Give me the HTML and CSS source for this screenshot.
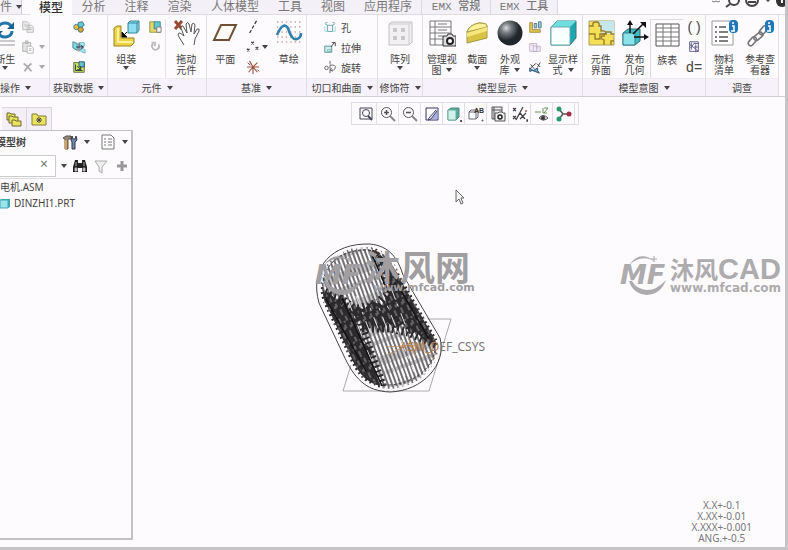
FILE: index.html
```html
<!DOCTYPE html>
<html lang="zh-CN">
<head>
<meta charset="utf-8">
<title>模型</title>
<link rel="stylesheet" href="styles.css">
</head>
<body>
<div class="app">
  <header class="ribbon">
    <nav class="tabs">
      <button class="tab tab-file">件<i class="caret"></i></button>
      <span></span>
      <button class="tab tab-active">模型</button>
      <button class="tab">分析</button>
      <button class="tab">注释</button>
      <button class="tab">渲染</button>
      <button class="tab">人体模型</button>
      <button class="tab">工具</button>
      <button class="tab">视图</button>
      <button class="tab">应用程序</button>
      <button class="tab tab-mono">EMX 常规</button>
      <button class="tab tab-mono">EMX 工具</button>
      <div class="quick">
        <svg width="76" height="10" viewBox="0 0 76 10" fill="none" stroke="#444"><path d="M3 1q2 2 4 0q2 2 4 0" stroke="#777"/><circle cx="25" cy="0" r="5" stroke-width="2"/><path d="M21 4l-4 3" stroke-width="2"/><circle cx="43" cy="0" r="6" stroke-width="2"/><path d="M39 2h8" stroke-width="2"/><path d="M57 0h4l-2 2z" fill="#444" stroke="none"/><circle cx="73" cy="1" r="6" fill="#333" stroke="none"/><path d="M73 0v3" stroke="#fff" stroke-width="2"/></svg>
      </div>
    </nav>

    <div class="groups">
      <section class="group">
        <div class="body cols-ops">
          <button class="tool">
            <svg class="ico" viewBox="0 0 28 28" fill="none"><path d="M7 10a7 6 0 0 1 13-3M21 12a7 6 0 0 1-13 3" stroke="#2276aa" stroke-width="3"/><path d="M23 3v7h-7zM5 19v-7h7z" fill="#17608f"/><path d="M4 22h20M4 26h20" stroke="#999"/></svg>
            <span>新生</span><i class="caret"></i>
          </button>
          <div class="stack stack-left">
            <button class="mini" aria-label="复制"><svg viewBox="0 0 16 16" fill="#eee" stroke="#b5b5b5"><path d="M2 2h5l2 2v7H2zM7 6h5l2 2v6H7z"/><path d="M4 5h2M4 7h2M9 9h3M9 11h3"/></svg></button>
            <button class="mini" aria-label="粘贴"><svg viewBox="0 0 16 16" fill="#e4e4e4" stroke="#b0b0b0"><path d="M2 3h9v10H2zM5 1h3v3H5z"/><path d="M7 7h5l2 2v6H7z" fill="#fff"/><path d="M9 10h3M9 12h3"/></svg><i class="caret pale"></i></button>
            <button class="mini" aria-label="删除"><svg viewBox="0 0 16 16" fill="none" stroke="#aaa" stroke-width="2"><path d="M3 4q5 3 9 9M12 4q-5 3-8 9"/></svg><i class="caret pale"></i></button>
          </div>
        </div>
        <button class="caption caption-start">操作<i class="caret"></i></button>
      </section>

      <section class="group">
        <div class="body">
          <div class="stack">
            <button class="mini" aria-label="用户定义特征"><svg viewBox="0 0 16 16" stroke="#36717c"><circle cx="5" cy="8" r="3" fill="#edbd42"/><path d="M7 3l5-1 2 4-4 3-3-2z" fill="#62c9da"/><circle cx="10" cy="11" r="3" fill="#dda531"/></svg></button>
            <button class="mini" aria-label="复制几何"><svg viewBox="0 0 16 16"><path d="M1 2l5 2v8l-5-3z" fill="#73dce5" stroke="#47818c"/><path d="M9 3h5v4H9zM10 9l5 2v4l-5-2z" fill="#a5ecf2" stroke="#6fb4bd"/><path d="M5 8h8M8 3v10M10 6l3 2-3 3" stroke="#123" fill="none"/></svg></button>
            <button class="mini" aria-label="收缩包络"><svg viewBox="0 0 16 16"><path d="M2 3h12v11H2z" fill="#d7df62" stroke="#51663f"/><path d="M8 2h6v6H8z" fill="#5bc4d0" stroke="#31505a"/><path d="M4 5v7h8M6 7l4 4M10 7v4H6" stroke="#15333b" fill="none"/></svg></button>
          </div>
        </div>
        <button class="caption">获取数据<i class="caret"></i></button>
      </section>

      <section class="group">
        <div class="body cols-component">
          <button class="tool">
            <svg class="ico" viewBox="0 0 28 28"><path d="M2 9l3-2h4v12h13v5l-3 3H2z" fill="#edd34b" stroke="#9a8521"/><path d="M6 9v14h15" stroke="#fff29a" fill="none" stroke-width="2"/><path d="M16 4l2-2h9v9l-2 3h-9z" fill="#8eddf0" stroke="#368499"/><path d="M16 4h9v9M25 4l2-2" stroke="#368499" fill="none"/><path d="M15 13l-4 4M10 13v5h5z" stroke="#111"/></svg>
            <span>组装</span><i class="caret"></i>
          </button>
          <div class="stack">
            <button class="mini" aria-label="创建"><svg viewBox="0 0 16 16"><path d="M2 2h6v8h6v4H2z" fill="#e4d667" stroke="#8e9441"/><path d="M7 2h7v8H7z" fill="#65c6ce" stroke="#34858e"/><path d="M10 8h5v6h-5z" fill="#f3f0ee" stroke="#777"/></svg></button>
            <button class="mini" aria-label="重复"><svg viewBox="0 0 16 16" fill="none" stroke="#bbb" stroke-width="2"><path d="M12 5a4 4 0 1 1-6-1"/><path d="M4 3h4v4"/></svg></button>
          </div>
          <button class="tool ruled">
            <svg class="ico" viewBox="0 0 28 28" fill="none"><path d="M3 2l7 8M10 2l-7 8" stroke="#984a32" stroke-width="3"/><path d="M12 26l-5-8q-2-4 1-4l4 3-3-8q0-3 2-2l4 7-1-9q2-3 3 0l2 8 1-8q2-2 3 1l-1 9 3-5q3-1 2 2l-4 8-1 6" fill="#fff" stroke="#555"/></svg>
            <span>拖动<br>元件</span>
          </button>
        </div>
        <button class="caption">元件<i class="caret"></i></button>
      </section>

      <section class="group">
        <div class="body cols-datum">
          <button class="tool">
            <svg class="ico" viewBox="0 0 28 28"><path d="M10 6h15l-7 15H3z" fill="#fdfaf5" stroke="#705035" stroke-width="2"/></svg>
            <span>平面</span>
          </button>
          <div class="stack">
            <button class="mini" aria-label="轴"><svg viewBox="0 0 16 16"><path d="M12 1L4 15" stroke="#333" stroke-dasharray="4 2" stroke-width="1.4"/></svg></button>
            <button class="mini" aria-label="点"><svg viewBox="0 0 16 16" fill="none" stroke="#444"><path d="M6 2l3 3m0-3L6 5M1 10l3 3m0-3l-3 3M11 8l3 3m0-3l-3 3" stroke-width="1.4"/></svg></button>
            <button class="mini" aria-label="坐标系"><svg viewBox="0 0 16 16" fill="none"><path d="M1 8h14M8 8L4 1M8 8l5-5M8 8l-5 6M8 8l5 6M8 8v8" stroke="#9b563c" stroke-width="1.3"/><path d="M2 3l3 3M13 11l2 2" stroke="#333"/></svg></button>
          </div>
          <i class="caret lone"></i>
          <button class="tool">
            <svg class="ico" viewBox="0 0 28 28" fill="none"><g stroke="#c9a797" stroke-width="1.4" stroke-dasharray="1.4 3"><path d="M2 3h25M2 8h25M2 13h25M2 18h25M2 23h25"/></g><path d="M2 16Q8 2 13 9Q17 22 22 20Q26 19 26 14" stroke="#2f80ab" stroke-width="2.6"/></svg>
            <span>草绘</span>
          </button>
        </div>
        <button class="caption">基准<i class="caret"></i></button>
      </section>

      <section class="group">
        <div class="body">
          <div class="stack rows">
            <button class="row"><svg viewBox="0 0 16 16" fill="none" stroke="#54999d"><path d="M2 4l3 2v7h6V6l3-2M5 6h6M3 3h2M11 3h2" /><path d="M2 7v6h3M14 7v6h-3" stroke="#9adadd"/></svg>孔</button>
            <button class="row"><svg viewBox="0 0 16 16" fill="none"><path d="M2 7h8v7H2z" fill="#d6efec" stroke="#498b88"/><path d="M9 8l4-5M10 3h4v4" stroke="#333"/><path d="M5 11h4v2H5z" stroke="#7bb"/></svg>拉伸</button>
            <button class="row"><svg viewBox="0 0 16 16" fill="none" stroke="#555"><path d="M8 1v14" stroke-dasharray="4 1"/><circle cx="4" cy="9" r="2"/><path d="M8 6q7-1 6 3t-6 2M10 9l-2 2 3 2"/></svg>旋转</button>
          </div>
        </div>
        <button class="caption">切口和曲面<i class="caret"></i></button>
      </section>

      <section class="group">
        <div class="body">
          <button class="tool">
            <svg class="ico" viewBox="0 0 28 28"><path d="M3 5l3-2h20v20l-3 3H3z" fill="#f2f0f3" stroke="#c2c0c4"/><path d="M3 5h20v21M23 5l3-2" fill="none" stroke="#ccc"/><g fill="#c9c7cb"><path d="M7 9h4v4H7zM15 9h4v4h-4zM7 17h4v4H7zM15 17h4v4h-4z"/></g></svg>
            <span>阵列</span><i class="caret"></i>
          </button>
        </div>
        <button class="caption">修饰符<i class="caret"></i></button>
      </section>

      <section class="group">
        <div class="body cols-display">
          <button class="tool">
            <svg class="ico" viewBox="0 0 28 28" fill="none"><path d="M2 2h21v24H2zM7 2v24M2 8h21M2 14h21M2 20h21M10 5h9M10 11h9M10 17h5" stroke="#777"/><path d="M15 17h4l1-2h4l1 2h3v10H15z" fill="#ddd" stroke="#333"/><circle cx="22" cy="22" r="3" stroke="#222" stroke-width="2" fill="#fff"/></svg>
            <span>管理视<br>图<i class="caret"></i></span>
          </button>
          <button class="tool">
            <svg class="ico" viewBox="0 0 28 28"><path d="M4 13Q6 6 16 4q9 0 8 4v11L4 24z" fill="#d9c346" stroke="#a5983e"/><path d="M4 13Q6 6 16 4q9 0 8 4L4 13z" fill="#fff19b" stroke="#a89b46"/><path d="M4 14l20-6v4L4 18z" fill="#f5e77c"/></svg>
            <span>截面</span><i class="caret"></i>
          </button>
          <button class="tool">
            <svg class="ico" viewBox="0 0 28 28"><defs><radialGradient id="ball" cx=".35" cy=".3"><stop offset="0" stop-color="#ddd"/><stop offset=".4" stop-color="#777d83"/><stop offset="1" stop-color="#20262c"/></radialGradient></defs><circle cx="14" cy="14" r="12.500" fill="url(#ball)"/></svg>
            <span>外观<br>库<i class="caret"></i></span>
          </button>
          <div class="stack">
            <button class="mini" aria-label="编辑位置"><svg viewBox="0 0 16 16"><path d="M2 3h3v8h9v3H2z" fill="#e5c94c" stroke="#9b803a"/><path d="M7 4h3v5H7zM12 2h3v7h-3z" fill="#99c7da" stroke="#55798b"/></svg></button>
            <button class="mini" aria-label="切换状态"><svg viewBox="0 0 16 16" fill="#f5edf8" stroke="#c0adc7"><path d="M2 4h8v9H2zM6 7h8v6H6zM4 6h3M9 9h3"/></svg></button>
            <button class="mini" aria-label="显示组合"><svg viewBox="0 0 16 16" fill="none"><path d="M3 9l6-5M3 5l4 5M10 4l4 4M14 3l-3 5" stroke="#333"/><path d="M2 9l4 3 5-3v3l2 3-8-3-3 1z" fill="#69a8c8" stroke="#244965"/></svg></button>
          </div>
          <button class="tool">
            <svg class="ico" viewBox="0 0 28 28"><path d="M2 8l6-6h19v17l-6 7H2z" fill="#1ba7ad" stroke="#47777c"/><path d="M2 8l6-6h19l-6 6z" fill="#6fdede"/><path d="M2 8h19v18H2z" fill="#f8ffff" stroke="#6baab0"/></svg>
            <span>显示样<br>式<i class="caret"></i></span>
          </button>
        </div>
        <button class="caption">模型显示<i class="caret"></i></button>
      </section>

      <section class="group">
        <div class="body cols-intent">
          <button class="tool">
            <svg class="ico" viewBox="0 0 28 28"><path d="M2 2h25v24H2z" fill="#f4df57" stroke="#aaa065"/><path d="M12 2h15v13H15l-1-5h-2z" fill="#c5e8ed"/><path d="M2 7h4q-1-4 3-4t3 4h2v5q5-1 5 3h-6v5H8v-5H2" fill="none" stroke="#987f2d" stroke-width="1.4"/><path d="M15 15h4v-2h5v2h3M17 26v-5q-4-1-2-4h3M24 26v-4h3" fill="none" stroke="#987f2d" stroke-width="1.4"/></svg>
            <span>元件<br>界面</span>
          </button>
          <button class="tool">
            <svg class="ico" viewBox="0 0 28 28"><path d="M2 14l5-4h12v12l-5 4H2z" fill="#3cbbc5" stroke="#306f77"/><path d="M2 14h12v12H2z" fill="#8be2ea" stroke="#34808a"/><path d="M9 14V3M12 15L23 4M13 18h13" stroke="#111" stroke-width="1.5"/><path d="M6 6l3-5 3 5zM19 3h6v6zM23 15l5 3-5 3z" fill="#111"/></svg>
            <span>发布<br>几何</span>
          </button>
          <button class="tool boxed">
            <svg class="ico" viewBox="0 0 28 28"><path d="M3 4h23v22H3z" fill="#fff" stroke="#555"/><path d="M3 8h23M3 12h23M3 17h23M3 21h23M10 4v22M18 4v22" stroke="#777"/></svg>
            <span>族表</span>
          </button>
          <div class="stack">
            <button class="mini sign">( )</button>
            <button class="mini" aria-label="切换符号"><svg viewBox="0 0 16 16" fill="none" stroke="#555588"><path d="M3 2h10v11H3zM3 5l10 8M5 3v8M8 4h5M8 8h5M4 9l5-6M10 5v9"/></svg></button>
            <button class="mini sign">d=</button>
          </div>
        </div>
        <button class="caption">模型意图<i class="caret"></i></button>
      </section>

      <section class="group">
        <div class="body cols-two">
          <button class="tool">
            <svg class="ico" viewBox="0 0 28 28"><path d="M2 2h21v24H2z" fill="#fff" stroke="#999"/><path d="M5 8h2M9 8h7M5 13h2M9 13h9M5 18h2M9 18h9M5 22h2M9 22h9" stroke="#555" stroke-width="1.4"/><rect x="19" y="1" width="9" height="13" rx="4" fill="#1d79bb"/><path d="M23 3v2M22 7h2v5M21 12h4" stroke="#fff" stroke-width="1.5" fill="none"/></svg>
            <span>物料<br>清单</span>
          </button>
          <button class="tool">
            <svg class="ico" viewBox="0 0 28 28" fill="none"><g stroke="#777" stroke-width="1.6"><rect x="1" y="20" width="10" height="5" rx="2.500" transform="rotate(-50 6 22)"/><rect x="7" y="15" width="10" height="5" rx="2.500" transform="rotate(-40 12 17)"/><rect x="12" y="9" width="10" height="5" rx="2.500" transform="rotate(-50 17 11)"/></g><rect x="19" y="1" width="9" height="13" rx="4" fill="#1d79bb"/><path d="M23 3v2M22 7h2v5M21 12h4" stroke="#fff" stroke-width="1.5"/></svg>
            <span>参考查<br>看器</span>
          </button>
        </div>
        <button class="caption">调查</button>
      </section>
    </div>
  </header>

  <main class="work">
    <aside class="side">
      <div class="side-tabs">
        <button aria-label="模型树"><svg viewBox="0 0 16 16" fill="#ebe35e" stroke="#6d6930"><path d="M1 2h3l1 1h4v6H1z"/><path d="M3 5h3l1 1h5v6H3z"/><path d="M6 9h3l1 1h5v5H6z"/></svg></button>
        <button aria-label="文件夹浏览器"><svg viewBox="0 0 16 16" fill="#ebe35e" stroke="#827d38"><path d="M1 3h5l1 2h8v9H1z"/><path d="M8 6v6M5 9h6M6 7l4 4M10 7l-4 4" stroke="#444"/></svg></button>
      </div>
      <div class="panel">
        <div class="panel-head">
          <h2>模型树</h2>
          <button class="pick" aria-label="设置"><svg viewBox="0 0 16 16"><path d="M1 4l3-2h5v3H6v10H3V5z" fill="#958875" stroke="#555"/><path d="M10 2l1 3h2l1-3 1 4-2 2v7h-3V8L9 6z" fill="#6f8eae" stroke="#334"/><path d="M4 6v9" stroke="#e0a34d" stroke-width="2"/></svg><i class="caret"></i></button>
          <button class="pick" aria-label="显示"><svg viewBox="0 0 16 16" fill="#fff" stroke="#777"><path d="M2 1h9l3 3v11H2z"/><path d="M4 5h2M8 5h4M4 8h2M8 8h4M4 11h2M8 11h4"/></svg><i class="caret"></i></button>
        </div>
        <div class="search">
          <input type="text" aria-label="搜索"><button class="clear" aria-label="清除">×</button>
          <i class="caret"></i>
          <button aria-label="查找"><svg viewBox="0 0 16 16" fill="#222"><path d="M3 2h3v3h4V2h3l2 7v5h-5v-4H6v4H1V9z"/><path d="M3 10h2v3H3zM11 10h2v3h-2zM4 4v4M12 4v4" fill="#ddd" stroke="#aaa"/></svg></button>
          <button aria-label="过滤"><svg viewBox="0 0 16 16" fill="#eee" stroke="#aaa"><path d="M2 3h12L9 9v6l-3-2V9z"/></svg></button>
          <button aria-label="添加"><svg viewBox="0 0 16 16"><path d="M8 3v10M3 8h10" stroke="#999" stroke-width="3"/></svg></button>
        </div>
        <ul class="tree">
          <li>电机.ASM</li>
          <li><svg viewBox="0 0 12 12"><path d="M0 3l2-1h8v8l-2 1H0z" fill="#35a9b3"/><path d="M0 3h8v8H0z" fill="#98e5ec" stroke="#4ba4ad"/></svg>DINZHI1.PRT</li>
        </ul>
      </div>
    </aside>

    <div class="view">
      <div class="bar">
        <button aria-label="重新调整"><svg viewBox="0 0 16 16" fill="none" stroke="#445"><path d="M2 2h12v11H2z"/><circle cx="8" cy="7" r="3.500"/><path d="M10 10l4 4" stroke-width="2"/></svg></button>
        <button aria-label="放大"><svg viewBox="0 0 16 16" fill="none" stroke="#555"><circle cx="6.500" cy="6.500" r="5"/><path d="M4 6.500h5M6.500 4v5" stroke-width="1.6"/><path d="M10 10l5 5" stroke-width="2" stroke="#888"/></svg></button>
        <button aria-label="缩小"><svg viewBox="0 0 16 16" fill="none" stroke="#555"><circle cx="6.500" cy="6.500" r="5"/><path d="M4 6.500h5" stroke-width="1.6"/><path d="M10 10l5 5" stroke-width="2" stroke="#888"/></svg></button>
        <button aria-label="重画"><svg viewBox="0 0 16 16"><path d="M2 2h12v12H2z" fill="#fff" stroke="#336"/><path d="M13 3v10H5z" fill="#a9b1dc"/><path d="M12 4l-7 8-1 2 3-1 6-8" fill="#dfe3f5" stroke="#446"/></svg></button>
        <button aria-label="显示样式"><svg viewBox="0 0 16 16"><path d="M2 4l3-2h8v9l-3 3H2z" fill="#4fa89a" stroke="#568c83"/><path d="M2 4h8v10H2z" fill="#d2f1e8" stroke="#6daea1"/><path d="M14 14h2v2h-2z" fill="#555"/></svg></button>
        <button aria-label="已命名视图"><svg viewBox="0 0 16 16" fill="#fff" stroke="#667"><path d="M1 6l2-2h7v7l-2 2H1zM1 6h7v7"/><text x="6" y="7" class="ab">AB</text><path d="M14 14h1v1h-1z" fill="#555"/></svg></button>
        <button aria-label="视图管理器"><svg viewBox="0 0 16 16" fill="#eee" stroke="#555"><path d="M2 1h10v12H2zM4 1v12M2 4h10"/><path d="M5 7h3l1-1h3l1 1h2v8H5z"/><circle cx="10" cy="11" r="2" stroke="#222" stroke-width="1.500"/></svg></button>
        <button aria-label="基准显示"><svg viewBox="0 0 16 16" fill="none" stroke="#444" stroke-width="1.300"><path d="M1 2l3 3m0-3L1 5M11 1L4 14M1 10l3 3m0-3l-3 3M8 7l5 6m1-6l-6 6"/><path d="M13 5h2" stroke="#a55"/><path d="M15 14h1v1h-1z"/></svg></button>
        <button aria-label="注释显示"><svg viewBox="0 0 16 16" fill="none" stroke="#555"><path d="M1 6h6M9 2v5h4M10 2h4l-4 5" stroke="#695"/><path d="M5 12q4-5 9 0q-4 4-9 0"/><circle cx="9" cy="12" r="2" fill="#333"/></svg></button>
        <button aria-label="旋转中心"><svg viewBox="0 0 16 16"><path d="M3 3l4 5h7M7 8l-4 5" stroke="#555" stroke-width="1.500" fill="none"/><circle cx="3" cy="3" r="2.500" fill="#2b986b"/><circle cx="3" cy="13" r="2.500" fill="#2b986b"/><circle cx="13" cy="8" r="2.500" fill="#a32c3f"/></svg></button>
      </div>

      <svg class="model" width="180" height="160" viewBox="310 238 180 160" fill="none">
        <defs>
          <pattern id="wire" width="4" height="31" patternUnits="userSpaceOnUse" patternTransform="rotate(-20)"><path d="M1 0v31" stroke="#222" stroke-width="1.300"/><path d="M3 0v9M3 15v4" stroke="#777" stroke-width=".8"/></pattern>
          <pattern id="mesh" width="7" height="23" patternUnits="userSpaceOnUse" patternTransform="rotate(-24)"><path d="M0 0h7v23H0z" fill="#2c2a2d"/><path d="M1 0v4M3 7v6M5 15v5M6 2v3M2 19v2" stroke="#bbb" stroke-width=".8"/></pattern>
          <clipPath id="hull"><path d="M323 302C313 270 334 246 368 247C386 249 394 260 400 275L437 339C444 362 422 387 390 389C367 388 357 377 347 353Z"/></clipPath>
        </defs>
        <path d="M365 319h86l-22 72h-86z" stroke="#aaa"/>
        <g clip-path="url(#hull)">
          <path d="M310 238h140v160H310z" fill="url(#wire)"/>
          <path d="M318 289L330 293L336 300L342 295L349 309L354 303L360 318L357 326L366 343L372 352L371 362L384 389L350 374Z" fill="url(#mesh)"/>
          <path d="M369 244L388 262L402 278L440 345L426 342L416 332L409 334L403 324L395 328L388 323L381 332L374 325L366 331L358 315L352 312L350 306L364 309L372 301L382 305L386 297L392 291L386 281L384 271Z" fill="url(#mesh)"/>
          <g stroke="#2c2a2d" stroke-dasharray="2 3" stroke-width="9"><path d="M320 291L340 298L356 311L370 352L383 388"/><path d="M358 309L378 303L389 292L384 268L371 248M362 328L390 328L408 332L436 344"/></g>
          <g stroke="#f5f3f6" stroke-width=".9" stroke-dasharray="12 5 3 7"><path d="M348 300l33 86M356 296l34 88M364 292l34 88M373 292l32 84M381 290l33 82M391 288l28 72"/></g>
          <path d="M370 250l18 42M399 287l30 52M342 298l40 88M326 299l40 72" stroke="#111" stroke-width="1.500"/>
        </g>
        <g stroke="#444"><path d="M319 303C309 267 332 243 370 244C390 246 398 259 403 275L440 338C447 364 423 391 390 392C365 391 354 378 343 354Z"/><path d="M323 302C313 270 334 246 368 247C386 249 394 260 400 275L437 339C444 362 422 387 390 389C367 388 357 377 347 353Z" stroke="#fefbff" stroke-width="4" stroke-dasharray="3 2"/><path d="M325 301C316 272 335 249 368 250C384 252 392 262 397 276L434 340C440 360 420 383 390 385C370 384 361 374 351 353Z" stroke-dasharray="3 2"/></g>
        <path d="M388 355l24-13 22 16M408 338l8 18M386 347l34-2" stroke="#bd8b5c" opacity=".8"/>
      </svg>
      <p class="csys"><span>ASM_D</span>EF_CSYS</p>

      <div class="mark mark-center">
        <svg width="50" height="44" viewBox="0 0 50 44"><path d="M9 12Q20-4 36 9Q22 0 9 12zM9 28Q13 41 27 42Q41 41 46 27Q37 37 27 37Q16 36 12 28z" fill="currentColor"/><path d="M34 3v6M31 6h6" stroke="currentColor"/><text x="0" y="31" class="mf">MF</text></svg>
        <div><strong class="wide">沐风网</strong><small>www.mfcad.com</small></div>
      </div>
      <div class="mark mark-right">
        <svg width="50" height="44" viewBox="0 0 50 44"><path d="M9 12Q20-4 36 9Q22 0 9 12zM9 28Q13 41 27 42Q41 41 46 27Q37 37 27 37Q16 36 12 28z" fill="currentColor"/><path d="M34 3v6M31 6h6" stroke="currentColor"/><text x="0" y="31" class="mf">MF</text></svg>
        <div><strong>沐风<b>CAD</b></strong><small>www.mfcad.com</small></div>
      </div>

      <svg class="pointer" width="10" height="17" viewBox="0 0 10 17"><path d="M1 1v12l3-3 2 5 2-1-2-5h3z" fill="#f4f4f4" stroke="#666"/></svg>

      <div class="tolerance"><span>X.X+-0.1</span><span>X.XX+-0.01</span><span>X.XXX+-0.001</span><span>ANG.+-0.5</span></div>
    </div>
  </main>
</div>
</body>
</html>
```

FILE: styles.css
```css
* { box-sizing: border-box; }

body {
  margin: 0;
  background: #fefbff;
  color: #444;
  font: 10px/11px "Noto Sans", "Noto Sans CJK SC", sans-serif;
}

button {
  margin: 0;
  padding: 0;
  border: 0;
  background: none;
  color: inherit;
  font: inherit;
  white-space: nowrap;
}

svg { display: block; flex: none; }

.app {
  display: flex;
  flex-direction: column;
  min-height: 100vh;
  overflow: hidden;
  border: solid #c6c4c7;
  border-width: 0 3px 3px 0;
}

.caret {
  display: inline-block;
  flex: none;
  border: 3px solid transparent;
  border-top: 4px solid #444;
  border-bottom: 0;
}

.pale { border-top-color: #aaa; }

/* Ribbon tabs */
.tabs {
  display: grid;
  grid-template-columns: 22fr 8fr 42fr 43fr 43fr 43fr 68fr 42fr 44fr 66fr 69fr 67fr 228fr;
  height: 15px;
  border-bottom: 1px solid #dfdbe2;
}

.tab {
  display: flex;
  align-items: center;
  justify-content: center;
  min-width: 0;
  height: 14px;
  background: #f4f0f7;
  color: #777;
  font-size: 12px;
  line-height: 14px;
}

.tab-file {
  gap: 4px;
  justify-content: flex-start;
  border-right: 1px solid #ccc;
}

.tab-active {
  height: 15px;
  background: #fefbff;
  color: #333;
  font-weight: 500;
}

.tab-mono {
  border-left: 1px solid #ddd8e0;
  font-family: "Liberation Mono", "Noto Sans CJK SC", monospace;
  font-size: 11px;
  font-weight: 500;
}

.quick {
  display: flex;
  justify-content: flex-end;
  overflow: hidden;
  border-left: 1px solid #ddd8e0;
}

/* Ribbon groups */
.groups {
  display: grid;
  grid-template-columns: 50fr 58fr 99fr 100fr 71fr 45fr 160fr 123fr 73fr 6fr;
  height: 82px;
  border-bottom: 1px solid #d2ced5;
  font-family: "Noto Sans CJK SC", sans-serif;
}

.group {
  display: flex;
  flex-direction: column;
  min-width: 0;
  border-right: 1px solid #e2dee5;
}

.body {
  display: grid;
  flex: 1;
  padding-top: 4px;
}

.cols-ops { grid-template-columns: minmax(0, 9fr) minmax(0, 32fr); }
.cols-component { grid-template-columns: 37fr 21fr 41fr; }
.cols-datum { grid-template-columns: 37fr 19fr 9fr 35fr; }
.cols-display { grid-template-columns: 38fr 33fr 33fr 18fr 38fr; }
.cols-intent { grid-template-columns: 36fr 32fr 33fr 22fr; }
.cols-two { grid-template-columns: 1fr 1fr; }

.tool {
  display: flex;
  flex-direction: column;
  align-items: center;
  min-width: 0;
}

.ico { width: 28px; height: 28px; }

.tool > span {
  margin-top: 6px;
  line-height: 11px;
}

.tool > .caret { margin-top: 2px; }
.tool span .caret { margin: 0 0 2px 5px; }

.ruled { border-left: 1px solid #e6e2e8; }
.boxed { border: solid #ddd9e0; border-width: 1px 0 0 1px; }

.stack {
  display: flex;
  flex-direction: column;
  align-items: center;
  gap: 4px;
}

.stack-left { align-items: flex-start; padding-left: 10px; }

.mini {
  display: flex;
  align-items: center;
  gap: 4px;
  height: 16px;
}

.mini svg, .row svg { width: 14px; height: 14px; }

.sign {
  font: 14px/16px "Liberation Sans", sans-serif;
}

.lone {
  align-self: center;
  justify-self: start;
  margin-bottom: 4px;
}

.rows { align-items: flex-start; padding-left: 16px; }

.row {
  display: flex;
  align-items: center;
  gap: 4px;
  height: 16px;
}

.caption {
  display: flex;
  align-items: center;
  justify-content: center;
  gap: 5px;
  height: 18px;
  border-top: 1px solid #eeeaf0;
  background: #f6f1fa;
}

.caption-start { justify-content: flex-start; }

/* Work area */
.work {
  display: grid;
  grid-template-columns: 133px minmax(0, 1fr);
  flex: 1;
}

.side {
  display: flex;
  flex-direction: column;
  padding: 10px 0 7px;
}

.side-tabs {
  display: flex;
  height: 23px;
  padding-left: 2px;
}

.side-tabs button {
  width: 25px;
  padding: 3px 4px;
  border: solid #dad6dd;
  border-width: 1px 1px 0 0;
  background: #f4eef6;
}

.side-tabs svg { width: 16px; height: 16px; }

.panel {
  flex: 1;
  border: solid #c4c1c6;
  border-width: 1px 2px 2px 0;
}

.panel-head {
  display: flex;
  align-items: center;
  gap: 10px;
  height: 22px;
  padding-right: 3px;
}

h2 {
  flex: 1;
  margin: 0 0 0 -4px;
  font-size: 10px;
  font-weight: bold;
}

.pick { display: flex; align-items: center; gap: 6px; }
.pick svg { width: 16px; height: 16px; }

.search {
  display: flex;
  align-items: center;
  height: 26px;
  gap: 5px;
  padding-right: 1px;
  border-bottom: 1px solid #dedae1;
}

.search input {
  flex: 1;
  min-width: 0;
  height: 22px;
  border: solid #ccc;
  border-width: 1px 1px 1px 0;
  background: #fff;
}

.clear {
  width: 14px;
  margin: 0 0 4px -24px;
  color: #777;
  font-size: 14px;
}

.clear + .caret { margin-left: 5px; }
.search svg { width: 16px; height: 16px; }

.tree {
  margin: 0;
  padding: 0;
  list-style: none;
}

.tree li {
  display: flex;
  align-items: center;
  gap: 2px;
  height: 16px;
}

.tree svg { width: 12px; height: 12px; }

/* Graphics area */
.view {
  position: relative;
  padding: 5px 0 0 12px;
}

.bar {
  display: flex;
  width: fit-content;
  height: 23px;
  margin: 0 auto;
  padding: 0 3px;
  border: 1px solid #e0dce3;
}

.bar button {
  width: 22px;
  padding: 2px 3px;
  border-right: 1px solid #e3dfe6;
}

.bar svg { width: 16px; height: 16px; }

.ab {
  fill: #333;
  stroke: none;
  font: bold 7px "Liberation Sans", sans-serif;
}

/* Items placed on the drawing canvas */
.model { position: absolute; left: 177px; top: 141px; }

.csys {
  position: absolute;
  left: 267px;
  top: 244px;
  margin: 0;
  color: #777;
  font-size: 12px;
}

.csys span { color: #b47c4d; }

.pointer { position: absolute; left: 322px; top: 92px; }

.mark {
  position: absolute;
  top: 156px;
  display: flex;
  color: #adabad;
}

.mark-center { left: 182px; color: #a09ea0; }
.mark-right { right: 4px; }

.mark strong {
  display: block;
  height: 29px;
  font: bold 24px/31px "Noto Sans CJK SC", sans-serif;
  white-space: nowrap;
}

.mark b { font: bold 29px/31px "Liberation Sans", sans-serif; }

.mark small {
  display: block;
  font: bold 12px/12px "DejaVu Sans", sans-serif;
}

.mark .wide { font-size: 35px; line-height: 25px; }

.mark-center small {
  padding-left: 8px;
  font-size: 11px;
}

.mf {
  fill: currentColor;
  font: italic bold 27px "DejaVu Sans", sans-serif;
}

.tolerance {
  position: absolute;
  right: 33px;
  bottom: 3px;
  display: flex;
  flex-direction: column;
  align-items: center;
  color: #777;
}
```
